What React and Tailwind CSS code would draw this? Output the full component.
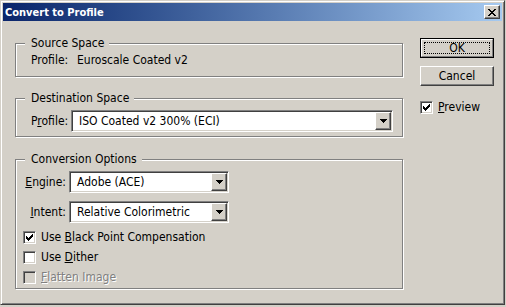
import React from 'react';

const raised =
  'border border-t-white border-l-white border-r-[#404040] border-b-[#404040] shadow-[inset_-1px_-1px_0_#808080]';
const sunken =
  'border border-t-[#808080] border-l-[#808080] border-r-white border-b-white shadow-[inset_1px_1px_0_#404040,inset_-1px_-1px_0_#d4d0c8]';

const Group = ({ label, className, children }) => (
  <div className={`relative border border-[#808080] shadow-[1px_1px_0_#fff,inset_1px_1px_0_#fff] ${className}`}>
    <span className="absolute -top-[7px] left-[9px] bg-[#d4d0c8] pl-[6px] pr-[5px] leading-[13px]">{label}</span>
    {children}
  </div>
);

const Select = ({ value, className }) => (
  <div className={`flex h-[22px] bg-white p-[1px] ${sunken} ${className}`}>
    <div className="flex-1 pl-[6px] leading-[18px] whitespace-nowrap overflow-hidden">{value}</div>
    <div className={`flex h-[18px] w-[16px] items-center justify-center bg-[#d4d0c8] ${raised}`}>
      <svg width="7" height="4" shapeRendering="crispEdges">
        <path d="M0 0h7v1h-1v1h-1v1h-1v1h-1v-1h-1v-1h-1v-1h-1z" fill="#000" />
      </svg>
    </div>
  </div>
);

const CheckMark = ({ color = '#000' }) => (
  <svg width="7" height="7" shapeRendering="crispEdges">
    {[2, 3, 4, 3, 2, 1, 0].map((y, x) => (
      <rect key={x} x={x} y={y} width="1" height="3" fill={color} />
    ))}
  </svg>
);

const Check = ({ checked, disabled, children }) => (
  <div className="flex h-[13px] items-center gap-[5px]">
    <div
      className={`flex h-[13px] w-[13px] items-center justify-center ${sunken} ${
        disabled ? 'bg-[#d4d0c8]' : 'bg-white'
      }`}
    >
      {checked && <CheckMark />}
    </div>
    <span
      className={`leading-[13px] whitespace-nowrap ${
        disabled ? 'text-[#808080] [text-shadow:1px_1px_0_#fff]' : ''
      }`}
    >
      {children}
    </span>
  </div>
);

const CloseGlyph = () => {
  const rows = [
    [0, 1, 6, 7],
    [1, 2, 5, 6],
    [2, 3, 4, 5],
    [3, 4],
    [2, 3, 4, 5],
    [1, 2, 5, 6],
    [0, 1, 6, 7],
  ];
  return (
    <svg width="8" height="7" shapeRendering="crispEdges">
      {rows.map((cols, y) =>
        cols.map((x) => <rect key={`${x}-${y}`} x={x} y={y} width="1" height="1" fill="#000" />)
      )}
    </svg>
  );
};

const App = () => {
  return (
    <div className="h-[307px] w-[506px] bg-[#d4d0c8] font-['DejaVu_Sans_Condensed','DejaVu_Sans',sans-serif] text-[12px] leading-[13px] text-black">
      <div className="flex h-[305px] w-[505px] flex-col border border-t-[#d4d0c8] border-l-[#d4d0c8] border-r-[#404040] border-b-[#404040] p-[2px] shadow-[inset_1px_1px_0_#fff,inset_-1px_-1px_0_#808080]">
        {/* title bar */}
        <div className="flex h-[18px] items-center justify-between bg-gradient-to-r from-[#0a246a] to-[#a6caf0] pl-[2px] pr-[2px]">
          <span className="text-[11px] font-bold text-white">Convert to Profile</span>
          <div className={`flex h-[14px] w-[16px] items-center justify-center bg-[#d4d0c8] ${raised}`}>
            <CloseGlyph />
          </div>
        </div>

        <div className="flex">
          {/* left column */}
          <div className="flex flex-col pl-[12px]">
            <Group label="Source Space" className="mt-[22px] h-[34px] w-[388px] pl-[15px] pt-[10px]">
              <div className="flex">
                <span className="w-[46px]">Profile:</span>
                <span>Euroscale Coated v2</span>
              </div>
            </Group>

            <Group label="Destination Space" className="mt-[21px] h-[39px] w-[388px] pt-[11px] pl-[15px]">
              <div className="flex items-center">
                <span className="w-[40px] whitespace-nowrap">
                  P<span className="underline">r</span>ofile:
                </span>
                <Select value="ISO Coated v2 300% (ECI)" className="w-[322px]" />
              </div>
            </Group>

            <Group label="Conversion Options" className="mt-[22px] h-[130px] w-[388px] pt-[11px]">
              <div className="flex items-center">
                <span className="w-[50px] text-right">
                  <span className="underline">E</span>ngine:
                </span>
                <Select value="Adobe (ACE)" className="ml-[3px] w-[160px]" />
              </div>
              <div className="mt-[8px] flex items-center">
                <span className="w-[50px] text-right">
                  <span className="underline">I</span>ntent:
                </span>
                <Select value="Relative Colorimetric" className="ml-[3px] w-[160px]" />
              </div>
              <div className="mt-[8px] flex flex-col gap-[7px] pl-[7px]">
                <Check checked>
                  Use <span className="underline">B</span>lack Point Compensation
                </Check>
                <Check>
                  Use <span className="underline">D</span>ither
                </Check>
                <Check disabled>
                  <span className="underline">F</span>latten Image
                </Check>
              </div>
            </Group>
          </div>

          {/* right column */}
          <div className="ml-[17px] mt-[17px] flex flex-col">
            <div className="relative h-[20px] w-[74px] border border-black">
              <div className="flex h-full w-full items-center justify-center border border-t-white border-l-white border-r-[#808080] border-b-[#808080]">
                OK
              </div>
              <div className="absolute inset-[3px] border border-dotted border-black" />
            </div>
            <div className={`mt-[8px] flex h-[20px] w-[74px] items-center justify-center ${raised}`}>Cancel</div>
            <div className="mt-[15px]">
              <Check checked>
                <span className="underline">P</span>review
              </Check>
            </div>
          </div>
        </div>
      </div>
    </div>
  );
};

export default App;
